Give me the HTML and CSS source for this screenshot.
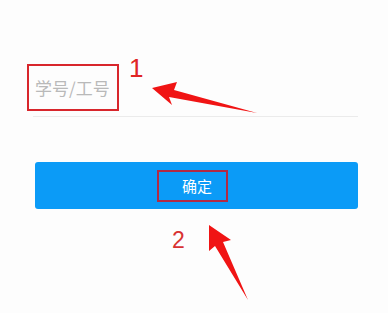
FILE: index.html
```html
<!DOCTYPE html>
<html lang="zh-CN">
<head>
    <meta charset="UTF-8">
    <meta name="viewport" content="width=device-width, initial-scale=1.0">
    <title>登录</title>
    <link rel="stylesheet" href="styles.css">
</head>
<body>
    <div class="login-form">
        <div class="form-group">
            <span class="mark placeholder">学号/工号</span>
        </div>

        <button type="button" class="submit-button">
            <span class="mark button-text">确定</span>
        </button>
    </div>

    <!-- annotation layer -->
    <svg class="notes" width="388" height="313" viewBox="0 0 388 313">
        <text x="129" y="77" class="note-num">1</text>
        <polygon class="note-arrow" points="152,88 177,82 174,90 257,113 169,97 172,105"/>
        <text x="172" y="248" class="note-num two">2</text>
        <polygon class="note-arrow" points="209,225 231,240 223,242 248,300 215,246 209,251"/>
    </svg>
</body>
</html>
```

FILE: styles.css
```css
* {
    margin: 0;
    padding: 0;
    box-sizing: border-box;
}

body {
    font-family: 'Noto Sans CJK SC', 'Noto Sans', sans-serif;
    background: #fdfdfd;
    width: 388px;
    height: 313px;
    padding: 64px 30px 0 33px;
    position: relative;
    overflow: hidden;
}

.form-group {
    width: 325px;
    display: flex;
    padding-bottom: 5px;
    border-bottom: 1px solid #ebebeb;
}

.mark {
    border: 2.5px solid #d8262c;
}

.placeholder {
    width: 92px;
    height: 47px;
    margin-left: -6px;
    padding-left: 6px;
    display: flex;
    align-items: center;
    color: #b9b9b9;
    font-size: 17px;
}

.submit-button {
    display: flex;
    align-items: center;
    justify-content: center;
    width: 323px;
    height: 47px;
    margin: 45px 0 0 2px;
    border: none;
    border-radius: 3px;
    background: #0b9bf7;
    font-family: inherit;
}

.button-text {
    width: 71px;
    height: 32px;
    margin-right: 8px;
    padding-left: 9px;
    display: flex;
    align-items: center;
    justify-content: center;
    border-color: #b22a44;
    color: #fff;
    font-size: 15px;
}

.notes {
    position: absolute;
    top: 0;
    left: 0;
}

.note-num {
    font-family: 'Liberation Sans', sans-serif;
    font-size: 26px;
    fill: #e02424;
}

.note-num.two {
    font-size: 23px;
    fill: #d83232;
}

.note-arrow {
    fill: #f01414;
}
```
